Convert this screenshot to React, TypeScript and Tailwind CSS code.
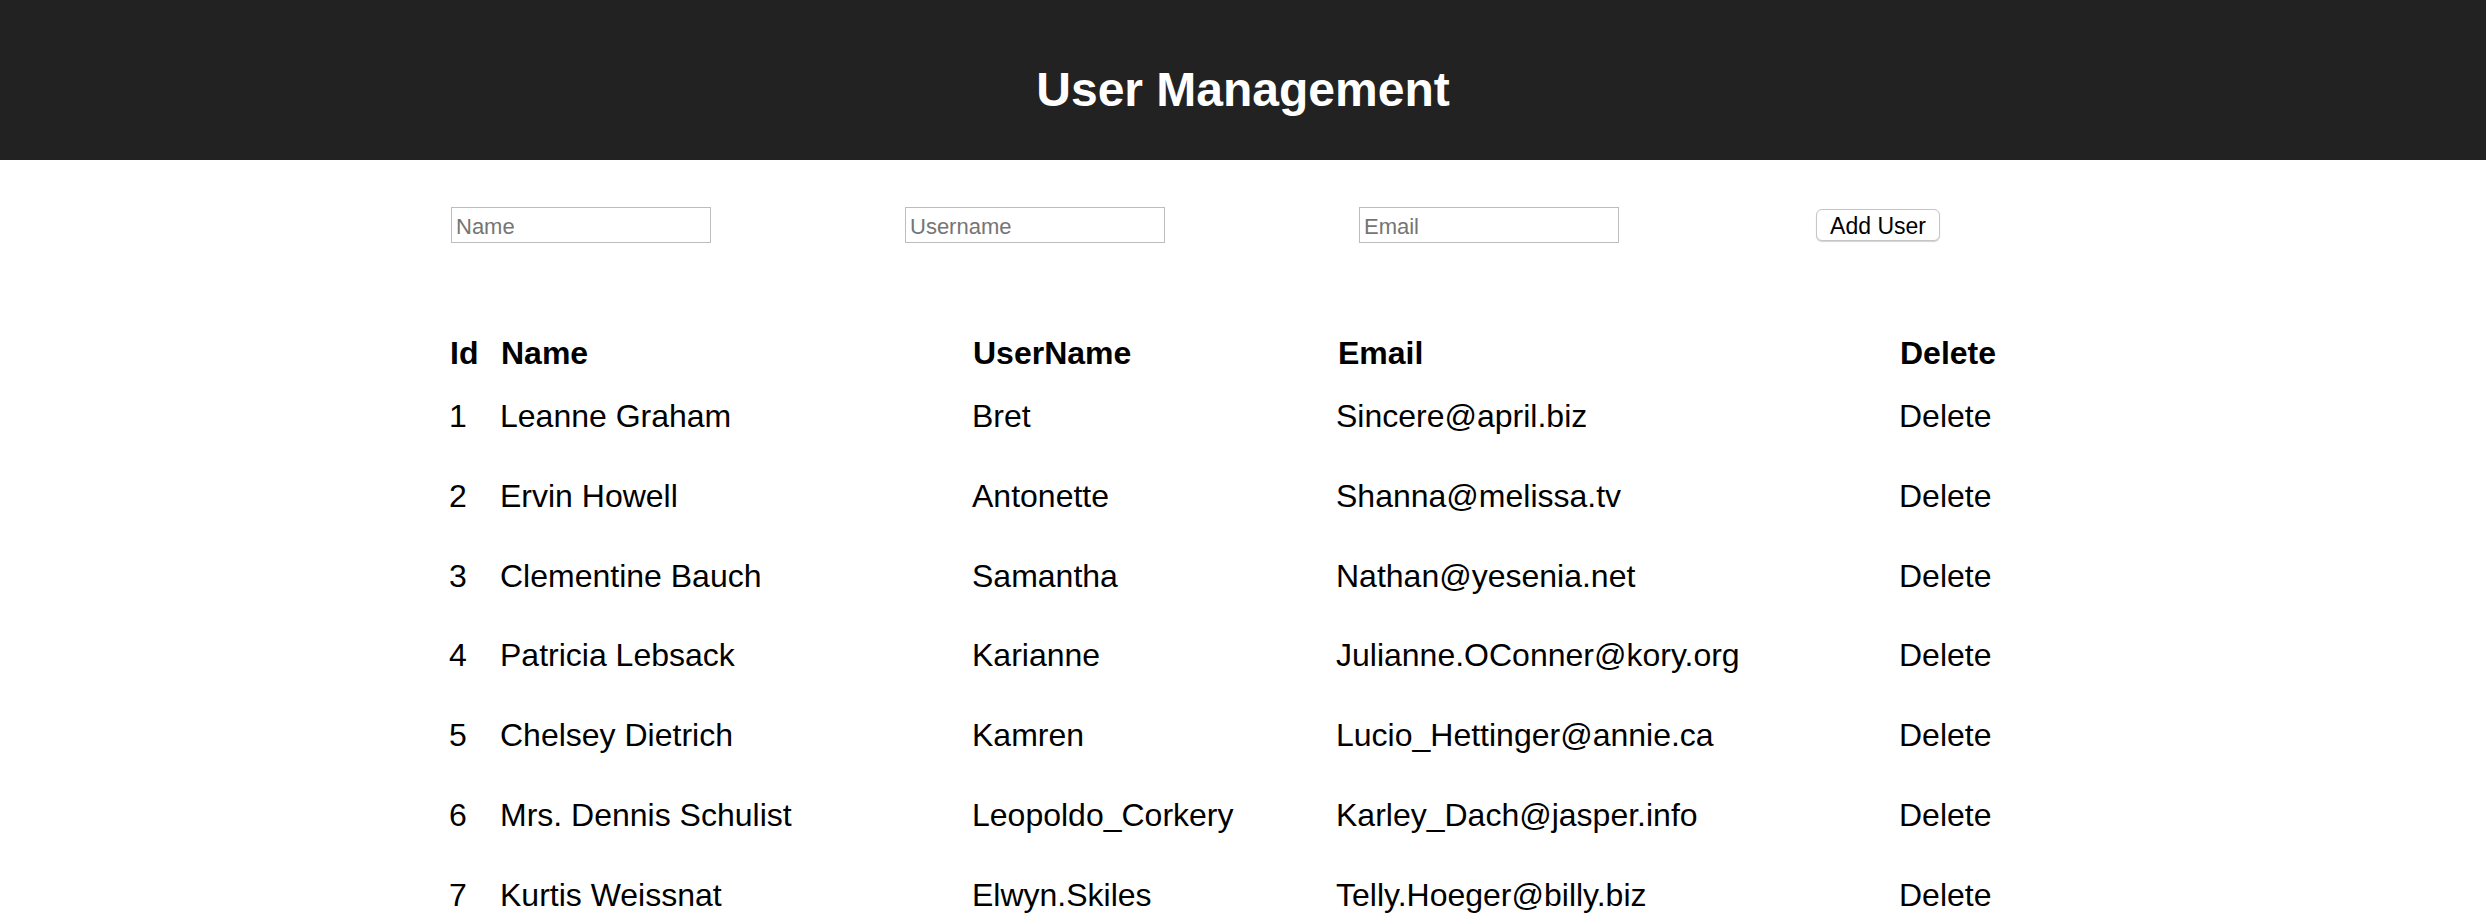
import React from "react";

const users = [
  { id: 1, name: "Leanne Graham", username: "Bret", email: "Sincere@april.biz" },
  { id: 2, name: "Ervin Howell", username: "Antonette", email: "Shanna@melissa.tv" },
  { id: 3, name: "Clementine Bauch", username: "Samantha", email: "Nathan@yesenia.net" },
  { id: 4, name: "Patricia Lebsack", username: "Karianne", email: "Julianne.OConner@kory.org" },
  { id: 5, name: "Chelsey Dietrich", username: "Kamren", email: "Lucio_Hettinger@annie.ca" },
  { id: 6, name: "Mrs. Dennis Schulist", username: "Leopoldo_Corkery", email: "Karley_Dach@jasper.info" },
  { id: 7, name: "Kurtis Weissnat", username: "Elwyn.Skiles", email: "Telly.Hoeger@billy.biz" },
];

const font = { fontFamily: '"Liberation Sans", Arial, Helvetica, sans-serif' };

export default function App() {
  return (
    <div className="min-h-[918px] bg-white text-black" style={font}>
      <header className="h-[160px] bg-[#222222]">
        <h1 className="pt-[62px] text-center text-[48px] font-bold leading-[55px] text-white">
          User Management
        </h1>
      </header>

      <div className="mx-auto w-[1588px]">
        <div className="mt-[47px] flex items-center pl-[2px]">
          <input
            placeholder="Name"
            className="h-[36px] w-[260px] border border-[#bdbdbd] px-[4px] pt-[3px] text-[22px] outline-none placeholder:text-[#757575]"
          />
          <input
            placeholder="Username"
            className="ml-[194px] h-[36px] w-[260px] border border-[#bdbdbd] px-[4px] pt-[3px] text-[22px] outline-none placeholder:text-[#757575]"
          />
          <input
            placeholder="Email"
            className="ml-[194px] h-[36px] w-[260px] border border-[#bdbdbd] px-[4px] pt-[3px] text-[22px] outline-none placeholder:text-[#757575]"
          />
          <button className="ml-[197px] h-[32px] w-[124px] rounded-[6px] border border-[#c6c6c6] bg-white pt-[2px] text-[23px] leading-none text-black shadow-[0_1px_1px_rgba(0,0,0,0.18)]">
            Add User
          </button>
        </div>

        <div className="mt-[92px] text-[32px] leading-[37px]">
          <div className="grid h-[63px] grid-cols-[51px_472px_364px_563px_1fr] font-bold">
            <div className="pl-[1px]">Id</div>
            <div className="pl-[1px]">Name</div>
            <div className="pl-[1px]">UserName</div>
            <div className="pl-[2px]">Email</div>
            <div className="pl-[1px]">Delete</div>
          </div>
          {users.map((u) => (
            <div
              key={u.id}
              className="grid h-[79.75px] grid-cols-[51px_472px_364px_563px_1fr]"
            >
              <div>{u.id}</div>
              <div>{u.name}</div>
              <div>{u.username}</div>
              <div>{u.email}</div>
              <div>Delete</div>
            </div>
          ))}
        </div>
      </div>
    </div>
  );
}
